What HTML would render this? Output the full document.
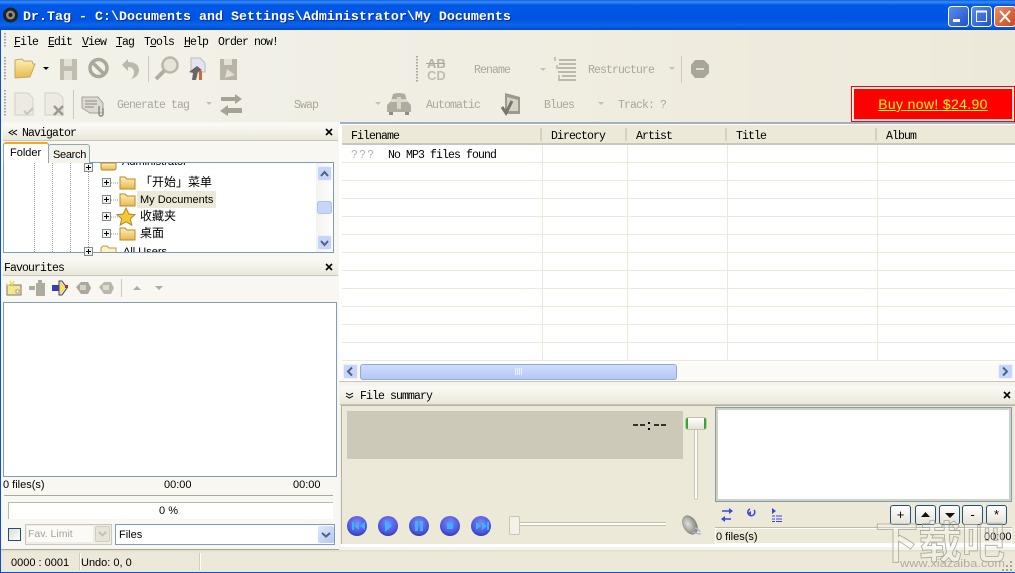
<!DOCTYPE html>
<html><head><meta charset="utf-8"><style>
html,body{margin:0;padding:0}
#w{position:relative;width:1015px;height:573px;overflow:hidden;background:#f0eee4;font-family:"Liberation Sans","Noto Sans CJK SC",sans-serif;font-size:11px;color:#000}
#w div{position:absolute;box-sizing:border-box}
.m{font-family:"Liberation Mono",monospace;font-size:11.5px;letter-spacing:-.9px;white-space:pre;line-height:14px}
.g{color:#a9a79b}
.t{white-space:pre;line-height:14px}
.h{background:linear-gradient(#fbfaf6,#ebe8da);border-bottom:1px solid #c9c6b6}
.sep{background:#d5d2c1;width:2px}
.b{background:linear-gradient(#fff,#e6e3d6);border:1px solid #1c5180;border-radius:3px;text-align:center;font-size:13px;line-height:18px}
u{text-decoration:underline}
</style></head><body><div id="w">
<div style="left:0;top:0;width:1015px;height:30px;background:linear-gradient(#0a5fe0 0,#3a8cf5 2px,#0058e6 5px,#0054e3 20px,#0a66ee 25px,#0048c8 30px)"></div>
<div style="left:0;top:30px;width:1015px;height:94px;background:linear-gradient(90deg,#f3f2ea,#ede9da)"></div>
<div style="left:0;top:30px;width:1px;height:543px;background:#0a4fd8;z-index:9"></div>
<div style="left:0;top:572px;width:1015px;height:1px;background:#0a4fd8;z-index:9"></div>

<div class="t" style="left:23px;top:10px;color:#fff;font:bold 13.33px/15px 'Liberation Mono',monospace;text-shadow:1px 1px 0 #0a2a90">Dr.Tag - C:\Documents and Settings\Administrator\My Documents</div>

<div class="m" style="left:14px;top:36px"><u>F</u>ile</div>
<div class="m" style="left:48px;top:36px"><u>E</u>dit</div>
<div class="m" style="left:82px;top:36px"><u>V</u>iew</div>
<div class="m" style="left:116px;top:36px"><u>T</u>ag</div>
<div class="m" style="left:144px;top:36px">T<u>o</u>ols</div>
<div class="m" style="left:184px;top:36px"><u>H</u>elp</div>
<div class="m" style="left:218px;top:36px">Order now!</div>

<div class="m g" style="left:117px;top:99px">Generate tag</div>
<div class="m g" style="left:294px;top:99px">Swap</div>
<div class="m g" style="left:426px;top:99px">Automatic</div>
<div class="m g" style="left:544px;top:99px">Blues</div>
<div class="m g" style="left:618px;top:99px">Track: ?</div>
<div class="m g" style="left:474px;top:64px">Rename</div>
<div class="m g" style="left:588px;top:64px">Restructure</div>

<div style="left:851px;top:86px;width:164px;height:36px;border:1px solid #f00;background:#f4f2e8"></div>
<div style="left:854px;top:89px;width:159px;height:31px;background:#f00;border-right:1px solid #ccc;border-bottom:1px solid #ccc;text-align:center;padding-top:7px;font-size:14px;line-height:16px;color:#ff0;letter-spacing:.35px"><u>Buy now! $24.90</u></div>

<!-- Left -->
<div style="left:1px;top:122px;width:338px;height:428px;background:#f8f7f2"></div>
<div class="h" style="left:3px;top:124px;width:335px;height:17px"></div>
<div class="m" style="left:22px;top:127px">Navigator</div>
<div class="h" style="left:3px;top:258px;width:335px;height:18px"></div>
<div class="m" style="left:4px;top:262px">Favourites</div>
<div style="left:3px;top:162px;width:331px;height:91px;background:#fff;border:1px solid #7f9db9"></div>
<div style="left:48px;top:144px;width:42px;height:19px;background:#f4f3ea;border:1px solid #91a7b4;border-bottom:0;border-radius:3px 3px 0 0;padding:3px 0 0 4px;line-height:14px;letter-spacing:-.3px">Search</div>
<div style="left:3px;top:142px;width:46px;height:21px;background:#fff;border:1px solid #91a7b4;border-top:2px solid #f5a623;border-bottom:0;border-radius:3px 3px 0 0;padding:1px 0 0 6px;line-height:16px;font-size:11px">Folder</div>

<div style="left:122px;top:163px;height:6px;overflow:hidden;width:80px"><div class="t" style="top:-8px;left:0">Administrator</div></div>
<div style="left:123px;top:246px;height:6px;overflow:hidden;width:80px"><div class="t" style="top:-1px;left:0">All Users</div></div>
<div class="t" style="left:140px;top:175px;font-size:12px">「开始」菜单</div>
<div style="left:137px;top:191px;width:79px;height:17px;background:#ece9d8"></div>
<div class="t" style="left:140px;top:193px">My Documents</div>
<div class="t" style="left:140px;top:209px;font-size:12px">收藏夹</div>
<div class="t" style="left:140px;top:226px;font-size:12px">桌面</div>

<div style="left:316px;top:163px;width:17px;height:89px;background:linear-gradient(90deg,#f3f3ee,#fdfdfa)"></div>

<div style="left:3px;top:302px;width:334px;height:175px;background:#fff;border:1px solid #7f9db9"></div>
<div class="t" style="left:3px;top:478px">0 files(s)</div>
<div class="t" style="left:164px;top:478px">00:00</div>
<div class="t" style="left:293px;top:478px">00:00</div>
<div style="left:4px;top:495px;width:329px;height:1px;background:#aca899"></div>
<div style="left:8px;top:502px;width:325px;height:17px;background:#fff;border:1px solid #bdbaa9;border-right:0;border-bottom:0;text-align:center;line-height:17px;padding-right:5px">0 %</div>
<div style="left:8px;top:528px;width:13px;height:13px;border:1px solid #1c5180;background:linear-gradient(135deg,#dcdcd2,#fff)"></div>
<div style="left:25px;top:524px;width:87px;height:21px;background:#f0eee4;border:1px solid #c9c7ba"></div>
<div style="left:27px;top:526px;width:66px;height:16px;background:#fbfaf6;color:#a5a396;line-height:16px;padding-left:1px;font-size:10.5px">Fav. Limit</div>
<div style="left:95px;top:526px;width:15px;height:16px;background:#e6e4d8;border:1px solid #d0cec0;border-radius:2px"></div>
<div style="left:115px;top:524px;width:220px;height:21px;background:#fff;border:1px solid #7f9db9;padding:3px 0 0 3px;line-height:14px;font-size:11px">Files</div>
<div style="left:318px;top:526px;width:16px;height:17px;background:linear-gradient(135deg,#dfe8fb,#b4c7f2);border-radius:2px"></div>

<!-- Status -->
<div style="left:1px;top:549px;width:1014px;height:23px;background:linear-gradient(#e0ddcc,#ece9d8 3px,#ece9d8);border-top:1px solid #a8a595"></div>
<div class="t" style="left:11px;top:556px">0000 : 0001</div>
<div class="t" style="left:81px;top:556px">Undo: 0, 0</div>
<div style="left:79px;top:553px;width:2px;height:17px;background:#fff;border-left:1px solid #d0cdbc"></div>
<div style="left:199px;top:553px;width:2px;height:17px;background:#fff;border-left:1px solid #d0cdbc"></div>

<!-- List -->
<div style="left:339px;top:122px;width:676px;height:428px;background:#fff"></div>
<div style="left:340px;top:122px;width:675px;height:2px;background:#9fb0c6"></div>
<div style="left:342px;top:125px;width:673px;height:20px;background:#ece9d8;border-bottom:2px solid #cbc7b8"></div>
<div class="m" style="left:351px;top:130px">Filename</div>
<div class="m" style="left:551px;top:130px">Directory</div>
<div class="m" style="left:636px;top:130px">Artist</div>
<div class="m" style="left:736px;top:130px">Title</div>
<div class="m" style="left:886px;top:130px">Album</div>
<div class="sep" style="left:540px;top:128px;height:13px"></div>
<div class="sep" style="left:625px;top:128px;height:13px"></div>
<div class="sep" style="left:725px;top:128px;height:13px"></div>
<div class="sep" style="left:875px;top:128px;height:13px"></div>
<div style="left:342px;top:145px;width:673px;height:216px;background:repeating-linear-gradient(#fff 0,#fff 17px,#ece9d8 17px,#ece9d8 18px)"></div>
<div class="m" style="left:351px;top:149px;color:#b0b0b0;letter-spacing:1.2px">???</div>
<div class="m" style="left:388px;top:149px">No MP3 files found</div>
<div style="left:542px;top:145px;width:1px;height:216px;background:#ece9d8"></div>
<div style="left:627px;top:145px;width:1px;height:216px;background:#ece9d8"></div>
<div style="left:727px;top:145px;width:1px;height:216px;background:#ece9d8"></div>
<div style="left:877px;top:145px;width:1px;height:216px;background:#ece9d8"></div>
<div style="left:342px;top:363px;width:673px;height:17px;background:#fbfaf6"></div>
<div style="left:343px;top:364px;width:15px;height:15px;background:#c7d6f8;border:1px solid #eef2fc;border-radius:2px"></div>
<div style="left:360px;top:364px;width:317px;height:16px;background:linear-gradient(#cfdcfb,#b4c8f6);border:1px solid #8ea8e8;border-radius:3px"></div>
<div style="left:998px;top:364px;width:15px;height:15px;background:#c7d6f8;border:1px solid #eef2fc;border-radius:2px"></div>
<div style="left:339px;top:381px;width:676px;height:169px;background:#f5f4ec;border-top:1px solid #c9c6b6"></div>

<!-- Summary -->
<div class="h" style="left:340px;top:386px;width:675px;height:19px"></div>
<div class="m" style="left:360px;top:390px">File summary</div>
<div style="left:341px;top:405px;width:674px;height:140px;background:#ece9d8;border-left:1px solid #b5b2a2;border-top:1px solid #b5b2a2"></div>
<div style="left:341px;top:544px;width:674px;height:3px;background:#fff"></div>
<div style="left:347px;top:411px;width:336px;height:48px;background:#cdc9b8"></div>
<div style="left:715px;top:407px;width:297px;height:95px;background:#fff;border:1px solid #7f9db9;box-shadow:inset 0 0 0 2px #d2cfbd"></div>
<div style="left:715px;top:527px;width:297px;height:1px;background:#bdbaa9"></div>
<div style="left:715px;top:528px;width:297px;height:16px;border:1px solid #fff"></div>
<div class="t" style="left:716px;top:530px">0 files(s)</div>
<div class="t" style="left:984px;top:530px">00:00</div>
<div class="b" style="left:890px;top:505px;width:21px;height:20px">+</div>
<div class="b" style="left:915px;top:505px;width:21px;height:20px"></div>
<div class="b" style="left:939px;top:505px;width:21px;height:20px"></div>
<div class="b" style="left:962px;top:505px;width:21px;height:20px">-</div>
<div class="b" style="left:986px;top:505px;width:21px;height:20px">*</div>

<div style="left:686px;top:418px;width:20px;height:11px;background:linear-gradient(#fff,#e4e1d4);border-left:2px solid #2fa838;border-right:2px solid #2fa838;border-radius:2px;box-shadow:0 0 0 1px #c4c1b0;z-index:3"></div>
<div style="left:694px;top:428px;width:4px;height:72px;background:#fdfdfa;border:1px solid #c9c6b6;border-radius:2px"></div>
<div style="left:510px;top:522px;width:156px;height:4px;background:#fdfdfa;border-top:1px solid #c1beae;border-bottom:1px solid #c1beae"></div>
<div style="left:509px;top:516px;width:11px;height:19px;background:#f3f1e8;border:1px solid #c9c6b6;border-radius:2px"></div>

<svg style="position:absolute;left:0;top:0;z-index:5" width="1015" height="573" viewBox="0 0 1015 573">
<defs>
<radialGradient id="bl" cx=".5" cy=".35" r=".7"><stop offset="0" stop-color="#7f88f5"/><stop offset=".7" stop-color="#4a55dc"/><stop offset="1" stop-color="#2b33a0"/></radialGradient>
<radialGradient id="sp" cx=".4" cy=".4" r=".7"><stop offset="0" stop-color="#e0e0dc"/><stop offset="1" stop-color="#77776f"/></radialGradient>
<linearGradient id="fo" x1="0" y1="0" x2="0" y2="1"><stop offset="0" stop-color="#fff0b8"/><stop offset="1" stop-color="#e8b84e"/></linearGradient>
<linearGradient id="wb" x1="0" y1="0" x2="1" y2="1"><stop offset="0" stop-color="#5c8df0"/><stop offset="1" stop-color="#1f4fd0"/></linearGradient>
<linearGradient id="wr" x1="0" y1="0" x2="1" y2="1"><stop offset="0" stop-color="#ea9070"/><stop offset="1" stop-color="#c84618"/></linearGradient>
<g id="fld"><path d="M1 3h5l2 2h8v10H1z" fill="url(#fo)" stroke="#b48a2c"/></g>
<g id="pl"><rect x=".5" y=".5" width="8" height="8" fill="#f2f1ea" stroke="#7f8a95"/><path d="M2 4.500h5M4.500 2v5" stroke="#000"/></g>
</defs>
<!-- title icon -->
<circle cx="10.500" cy="15" r="7.500" fill="#222"/><circle cx="10.500" cy="15" r="4.500" fill="#8c8c80"/><circle cx="10.500" cy="15" r="2" fill="#222"/>
<!-- window buttons -->
<rect x="948.500" y="6.500" width="20" height="20" rx="3" fill="url(#wb)" stroke="#fff"/><rect x="953" y="19" width="7" height="3" fill="#fff"/>
<rect x="971.500" y="6.500" width="20" height="20" rx="3" fill="url(#wb)" stroke="#fff"/><path d="M976.500 11.500h10v10h-10z" fill="none" stroke="#fff"/><path d="M976 11.500h11" stroke="#fff" stroke-width="2"/>
<rect x="994.500" y="6.500" width="21" height="20" rx="3" fill="url(#wr)" stroke="#fff"/><path d="M1000 11l10 11M1010 11l-10 11" stroke="#fff" stroke-width="2"/>
<!-- grips -->
<g stroke="#a9a799" stroke-dasharray="1.500 1.500" stroke-width="2"><path d="M5 33v15M5 57v24M5 90v27M417 56v26"/></g>
<!-- row1 -->
<path d="M15 60l7-1 2 2h8l1 3h2l-5 13-15 1z" fill="url(#fo)" stroke="#c4a860"/>
<path d="M43 67h6l-3 3z" fill="#000"/>
<path d="M60 59h17v21H60z" fill="#c0bdb0"/><path d="M64 59h8v7h-8zM64 71h8v9h-8z" fill="#e2e0d4"/>
<circle cx="98.500" cy="68" r="8.500" fill="none" stroke="#aaa89b" stroke-width="3.500"/><path d="M92 62l13 13" stroke="#aaa89b" stroke-width="3.500"/>
<path d="M128 59l-6 6 6 6v-4c4 0 6 2 6 5 0 3-1 5-3 7 5-1 8-5 8-9 0-5-4-8-11-8z" fill="#bcb9ac"/>
<rect x="148" y="56" width="1" height="26" fill="#cdc9b5"/>
<circle cx="170" cy="65" r="7.500" fill="#e6e4da" stroke="#b9b6aa" stroke-width="2.500"/><path d="M164 71l-8 8" stroke="#b0ad9f" stroke-width="4"/>
<path d="M191 58h9l5 5v9h-14z" fill="#e4e4f0" stroke="#bbb"/><path d="M189 72l8-6 5 4-4 2-2 8h-4l1-7z" fill="#666"/><rect x="199" y="71" width="3" height="9" fill="#d9643a"/>
<path d="M220 59h17v21h-17z" fill="#b8b5a8"/><path d="M224 59h8v6h-8z" fill="#e2e0d4"/><path d="M225 78l2-9 8 6z" fill="#e2e0d4"/>
<!-- AB CD -->
<text x="427" y="68" font-family="Liberation Sans" font-weight="bold" font-size="13" fill="#b5b3a6">AB</text><path d="M426 63.500h19" stroke="#aaa89b"/>
<text x="427" y="80" font-family="Liberation Sans" font-weight="bold" font-size="13" fill="#c0bdb0">CD</text>
<path d="M540 68h6l-3 3zM669 67h6l-3 3z" fill="#c4c1b2"/>
<path d="M559 60h17M559 64h17" stroke="#aaa89b" stroke-width="1.500"/><path d="M558 68h18M558 72h18M562 76h14M558 80h18" stroke="#aaa89b" stroke-width="1.500"/><path d="M555 57v4M557 65v4M559 75v4" stroke="#999"/>
<rect x="681" y="56" width="1" height="27" fill="#cdc9b5"/>
<path d="M695 60h9l5 5v8l-5 5h-9l-4-5v-8z" fill="#a8a69b"/><rect x="696" y="68" width="8" height="2" fill="#dedcd0"/>
<!-- row 2 -->
<path d="M15 93h13l5 5v17H15z" fill="#eceae2" stroke="#d5d3c6"/><path d="M24 111l3 3 6-6" stroke="#c8c6b8" fill="none" stroke-width="2"/>
<path d="M45 93h13l5 5v17H45z" fill="#eceae2" stroke="#d5d3c6"/><path d="M54 106l9 9M63 106l-9 9" stroke="#9c9a8e" stroke-width="2.500"/>
<rect x="73" y="90" width="1" height="29" fill="#cdc9b5"/>
<path d="M82 97h16l5 6v10H90l-8-5z" fill="#dcdad0" stroke="#a5a397"/><path d="M85 101h12M85 104h12M85 107h9" stroke="#8e8c80"/><path d="M99 106v8a2 2 0 0 0 4 0v-6" fill="none" stroke="#8e8c80" stroke-width="1.500"/>
<path d="M206 102h6l-3 3zM375 102h6l-3 3zM598 102h6l-3 3z" fill="#c4c1b2"/>
<path d="M221 97h14v-3l7 5-7 5v-3h-14z" fill="#a5a397"/><path d="M242 108h-14v-3l-8 6 8 5v-3h14z" fill="#a5a397"/>
<path d="M393 94q6-2 12 0l2 7 4 4v7h-24v-7l4-4z" fill="#aeac9f"/><path d="M391 102h16v-3h-16z" fill="#dcdad0"/><rect x="397" y="97" width="4" height="12" fill="#d8d6ca"/><rect x="389" y="112" width="4" height="3" fill="#8f8d81"/><rect x="405" y="112" width="4" height="3" fill="#8f8d81"/>
<path d="M505 93l15 4v17h-15z" fill="#9c9a8e"/><path d="M507 97l11 3v11h-11z" fill="#d5d3c6"/><path d="M502 107l4 6 6-12" stroke="#77756b" stroke-width="3" fill="none"/>
<!-- Panel x/arrows -->
<g stroke="#000" stroke-width="1.600"><path d="M326 129l6 6M332 129l-6 6M326 264l6 6M332 264l-6 6M1004 392l6 6M1010 392l-6 6"/></g>
<path d="M13 130l-4 2.500 4 2.500M17 130l-4 2.500 4 2.500" fill="none" stroke="#000"/>
<path d="M346 393l3.500 2 3.500-2M346 396l3.500 2 3.500-2" fill="none" stroke="#000"/>
<!-- Tree -->
<g stroke="#999" stroke-dasharray="1 1"><path d="M34.500 163v89M52.500 163v89M70.500 163v89M88.500 170v77M111 183h7M111 200h7M111 217h7M111 234h7"/></g>
<use href="#pl" x="84" y="163"/><use href="#pl" x="102" y="178"/><use href="#pl" x="102" y="195"/><use href="#pl" x="102" y="212"/><use href="#pl" x="102" y="229"/><use href="#pl" x="84" y="247"/>
<path d="M101 163h15v5a2 2 0 0 1-2 2h-12a2 2 0 0 1-1-2z" fill="url(#fo)" stroke="#a98a2c"/>
<use href="#fld" x="119" y="174"/><use href="#fld" x="119" y="191"/><use href="#fld" x="119" y="225"/>
<path d="M101 252v-4l2-2h4l2 2h7v4" fill="#fff2c0" stroke="#b89a50"/>
<path d="M126 208l2.800 6 6.200.6-4.700 4.200 1.500 6.300-5.800-3.300-5.800 3.300 1.500-6.300-4.700-4.200 6.200-.6z" fill="#f6c832" stroke="#a98a2c"/>
<!-- Tree scroll -->
<rect x="317.500" y="166.500" width="14" height="14" rx="2" fill="#c7d6f8" stroke="#eef2fc"/><path d="M321 176l3.500-4 3.500 4" fill="none" stroke="#4d6185" stroke-width="2"/>
<rect x="317.500" y="201.500" width="14" height="12" rx="2" fill="#c7d6f8" stroke="#aec2f0"/>
<rect x="317.500" y="235.500" width="14" height="14" rx="2" fill="#c7d6f8" stroke="#eef2fc"/><path d="M321 241l3.500 4 3.500-4" fill="none" stroke="#4d6185" stroke-width="2"/>
<!-- Fav toolbar -->
<rect x="7" y="285" width="14" height="10" fill="#f5e88c" stroke="#777"/><path d="M10 281l2 4M6 284l4 2M14 281l-2 4" stroke="#eddc50" stroke-width="1.500"/><rect x="16" y="290" width="3" height="3" fill="#fff" stroke="#555" stroke-width=".5"/>
<path d="M29 286h6v4h-6z" fill="#aeac9f"/><path d="M36 283h9v13h-9zM38 280h4v3h-4z" fill="#aeac9f"/>
<path d="M52 285h8v6h-8z" fill="#3c3ca8"/><path d="M59 281h3l5 7-5 7h-3z" fill="#f4e45c" stroke="#3c3ca8" stroke-width="1"/><rect x="65" y="285" width="3" height="3" fill="#9e3040"/>
<path d="M76 287l5-5h7l3 6-3 6h-7z" fill="#aaa89c"/><path d="M99 287l5-5h7l3 6-3 6h-7z" fill="#bab8ab"/><rect x="80" y="285" width="6" height="5" fill="#d5d3c6"/><rect x="103" y="285" width="6" height="5" fill="#dedcd0"/>
<rect x="121" y="279" width="1" height="18" fill="#cdc9b5"/>
<path d="M133 290l4-4 4 4zM155 286h8l-4 4z" fill="#aeac9f"/>
<!-- Combo arrows -->
<path d="M99 532l3.500 3.500 3.500-3.500" fill="none" stroke="#c2c0b2" stroke-width="2"/>
<path d="M322 533l4 3.500 4-3.500" fill="none" stroke="#4d6185" stroke-width="2"/>
<!-- H scroll -->
<path d="M352 367.500l-4 4 4 4" fill="none" stroke="#4d6185" stroke-width="2"/><path d="M1003 367.500l4 4-4 4" fill="none" stroke="#4d6185" stroke-width="2"/>
<path d="M515.500 368v7M517.500 368v7M519.500 368v7M521.500 368v7" stroke="#eef2fc"/>
<!-- time -->
<path d="M633 425h5M640 425h5M654 425h5M661 425h5" stroke="#000" stroke-width="1.600"/><path d="M649 422v2M649 428v2" stroke="#000" stroke-width="2"/>
<!-- player buttons -->
<g fill="url(#bl)"><circle cx="357" cy="526" r="10"/><circle cx="388" cy="526" r="10"/><circle cx="419" cy="526" r="10"/><circle cx="450" cy="526" r="10"/><circle cx="481" cy="526" r="10"/></g>
<g fill="#3fb0ff"><path d="M352 522h2v8h-2zM359 522v8l-5-4zM365 522v8l-5-4zM385 520l7 6-7 6zM415 521h3v10h-3zM420 521h3v10h-3zM447 523h6v6h-6zM476 522l5 4-5 4zM482 522l5 4-5 4zM487 522h2v8h-2z"/></g>
<!-- speaker -->
<ellipse cx="690" cy="525" rx="6.500" ry="10" fill="url(#sp)" stroke="#8a8a82" stroke-width=".6" transform="rotate(-30 690 525)"/><path d="M695 528q4 1 5 4M693 532q4 2 8 2" stroke="#b5b5d0" fill="none" stroke-width="1.500"/>
<!-- right toolbar -->
<g stroke="#3a44e0" fill="none" stroke-width="1.500"><path d="M722 511h9M722 519h9"/><path d="M754 510a3.500 3.500 0 1 1-4-1"/></g>
<path d="M729 508l4 3-4 3zM725 516l-4 3 4 3zM748 513l3-2v4zM772 508l4 3-4 3z" fill="#3a44e0"/>
<path d="M772 516h3M772 519h3M772 521.500h3M776 516h6M776 519h6M776 521.500h6" stroke="#3a44e0"/>
<path d="M921 517l4.500-5 4.500 5zM945 513h10l-5 5z" fill="#111"/>
<!-- watermark -->
<text x="875" y="558" font-family="Noto Sans CJK SC" font-weight="bold" font-size="44" textLength="130" lengthAdjust="spacingAndGlyphs" fill="rgba(255,255,255,.25)" stroke="#a8a698" stroke-width=".8">下载吧</text>
<text x="900" y="567" font-family="Liberation Sans" font-size="11" textLength="105" lengthAdjust="spacingAndGlyphs" fill="#b0ae9f">www.xiazaiba.com</text>
<path d="M1010 562h2M1006 566h2M1010 566h2M1002 570h2M1006 570h2M1010 570h2" stroke="#a5a394" stroke-width="2"/>
</svg>
</div></body></html>
